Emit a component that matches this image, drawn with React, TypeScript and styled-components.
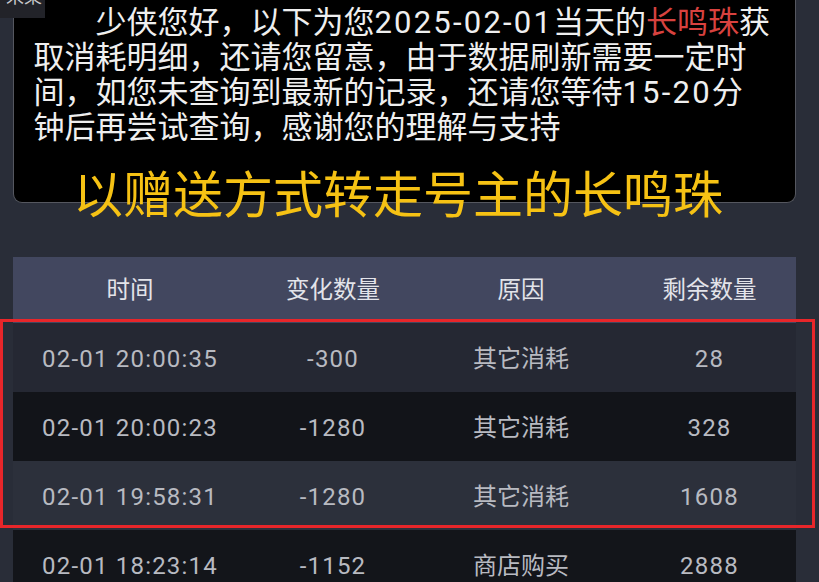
import React from "react";
import styled, { createGlobalStyle } from "styled-components";

const Global = createGlobalStyle`
  html, body { margin: 0; padding: 0; background: #292d38; }
  body { width: 819px; height: 582px; overflow: hidden; }
  * { box-sizing: border-box; }
`;

const Page = styled.div`
  position: relative;
  width: 819px;
  height: 582px;
  overflow: hidden;
  background: #292d38;
  padding: 0 23px 0 13px;
  font-family: Roboto, "Noto Sans CJK SC", sans-serif;
`;

const CornerLabel = styled.div`
  position: absolute;
  top: 0;
  left: 0;
  width: 45px;
  height: 18px;
  background: #222329;
  overflow: hidden;
  color: #c9c9cc;
  font-size: 18px;
  line-height: 18px;
  padding-left: 6px;
  & > span { display: block; margin-top: -12px; }
`;

const Notice = styled.div`
  background: #000;
  border: 1.5px solid #55575f;
  border-top: none;
  border-radius: 0 0 9px 9px;
  height: 203px;
  padding: 5px 10px 0 19.5px;
  color: #efefef;
  font-size: 31px;
  line-height: 35px;
  text-indent: 2em;
  white-space: nowrap;
`;

const Num = styled.span`
  letter-spacing: 2.2px;
`;

const Highlight = styled.span`
  color: #d8423f;
`;

const Annotation = styled.div`
  position: absolute;
  top: 160px;
  left: 0;
  width: 796px;
  text-align: center;
  color: #f6c214;
  font-family: "Noto Sans CJK SC", sans-serif;
  font-size: 50px;
  line-height: 62px;
  white-space: nowrap;
`;

const Table = styled.div`
  margin-top: 54px;
  width: 783px;
`;

const Row = styled.div<{ $bg: string; $h: number }>`
  display: grid;
  grid-template-columns: 234px 172px 204px 1fr;
  height: ${(p) => p.$h}px;
  background: ${(p) => p.$bg};
  align-items: center;
`;

const HeadCell = styled.div`
  text-align: center;
  color: #e3e4ea;
  font-size: 23.5px;
  line-height: 1;
  padding-top: 2px;
`;

const Cell = styled.div<{ $num?: boolean }>`
  text-align: center;
  color: #b8bac1;
  font-size: 24px;
  line-height: 1;
  letter-spacing: ${(p) => (p.$num ? "1.2px" : "0")};
  padding-top: 2px;
`;

const RedFrame = styled.div`
  position: absolute;
  left: 0;
  top: 319px;
  width: 815px;
  height: 209px;
  border: 3px solid #e8262a;
  pointer-events: none;
`;

const rows = [
  { t: "02-01 20:00:35", c: "-300", r: "其它消耗", n: "28", bg: "#252833" },
  { t: "02-01 20:00:23", c: "-1280", r: "其它消耗", n: "328", bg: "#121419" },
  { t: "02-01 19:58:31", c: "-1280", r: "其它消耗", n: "1608", bg: "#2c303b" },
  { t: "02-01 18:23:14", c: "-1152", r: "商店购买", n: "2888", bg: "#13151a" },
];

export default function App() {
  return (
    <>
      <Global />
      <Page>
        <Notice>
          少侠您好，以下为您<Num>2025-02-01</Num>当天的<Highlight>长鸣珠</Highlight>获
          <br />
          取消耗明细，还请您留意，由于数据刷新需要一定时
          <br />
          间，如您未查询到最新的记录，还请您等待<Num>15-20</Num>分
          <br />
          钟后再尝试查询，感谢您的理解与支持
        </Notice>
        <Table>
          <Row $bg="#42475f" $h={66}>
            <HeadCell>时间</HeadCell>
            <HeadCell>变化数量</HeadCell>
            <HeadCell>原因</HeadCell>
            <HeadCell>剩余数量</HeadCell>
          </Row>
          {rows.map((r) => (
            <Row key={r.t} $bg={r.bg} $h={69}>
              <Cell $num>{r.t}</Cell>
              <Cell $num>{r.c}</Cell>
              <Cell>{r.r}</Cell>
              <Cell $num>{r.n}</Cell>
            </Row>
          ))}
        </Table>
        <Annotation>以赠送方式转走号主的长鸣珠</Annotation>
        <RedFrame />
        <CornerLabel>
          <span>来柔</span>
        </CornerLabel>
      </Page>
    </>
  );
}
